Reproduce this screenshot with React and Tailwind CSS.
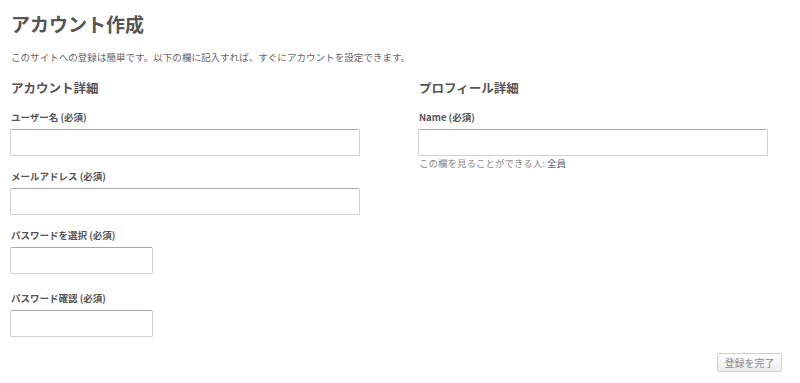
export default function App() {
  const label = "block text-[9.5px] leading-[12px] font-bold text-[#555] mb-[6px]";
  const input =
    "block h-[27px] rounded-[2px] border border-[#d0d0d0] border-t-[#a8a8a8] bg-white";
  return (
    <div className="w-[800px] h-[383px] bg-white font-['Noto_Sans_CJK_JP',sans-serif] pl-[10px] pt-[12px]">
      <h1 className="text-[19px] leading-[24px] font-bold text-[#555] pl-[1px]">アカウント作成</h1>
      <p className="mt-[15px] text-[9.55px] leading-[12px] text-[#666] pl-[1px]">
        このサイトへの登録は簡単です。以下の欄に記入すれば、すぐにアカウントを設定できます。
      </p>
      <div className="mt-[17px] grid grid-cols-[350px_350px] gap-x-[58px]">
        <div>
          <h2 className="text-[12.5px] leading-[16px] font-bold text-[#555] pl-[1px] mb-[15px]">アカウント詳細</h2>
          <label className={label + " pl-[1px]"}>ユーザー名 (必須)</label>
          <div className={input + " w-[350px]"} />
          <label className={label + " pl-[1px] mt-[14px]"}>メールアドレス (必須)</label>
          <div className={input + " w-[350px]"} />
          <label className={label + " pl-[1px] mt-[14px]"}>パスワードを選択 (必須)</label>
          <div className={input + " w-[143px]"} />
          <label className={label + " pl-[1px] mt-[18px]"}>パスワード確認 (必須)</label>
          <div className={input + " w-[143px]"} />
        </div>
        <div>
          <h2 className="text-[12.5px] leading-[16px] font-bold text-[#555] pl-[1px] mb-[15px]">プロフィール詳細</h2>
          <label className={label + " pl-[1px]"}>Name (必須)</label>
          <div className={input + " w-[350px]"} />
          <p className="mt-[1px] text-[9.5px] leading-[12px] text-[#888] pl-[1px]">
            この欄を見ることができる人: <span className="text-[#666]">全員</span>
          </p>
        </div>
      </div>
      <div className="flex justify-end pr-[18px] mt-[16px]">
        <button className="h-[19px] w-[65px] rounded-[2px] border border-[#cfcfcf] bg-gradient-to-b from-[#fdfdfd] to-[#eeeeee] text-[10px] leading-[17px] text-[#8a8a8a] font-['Noto_Sans_CJK_JP',sans-serif]">
          登録を完了
        </button>
      </div>
    </div>
  );
}
